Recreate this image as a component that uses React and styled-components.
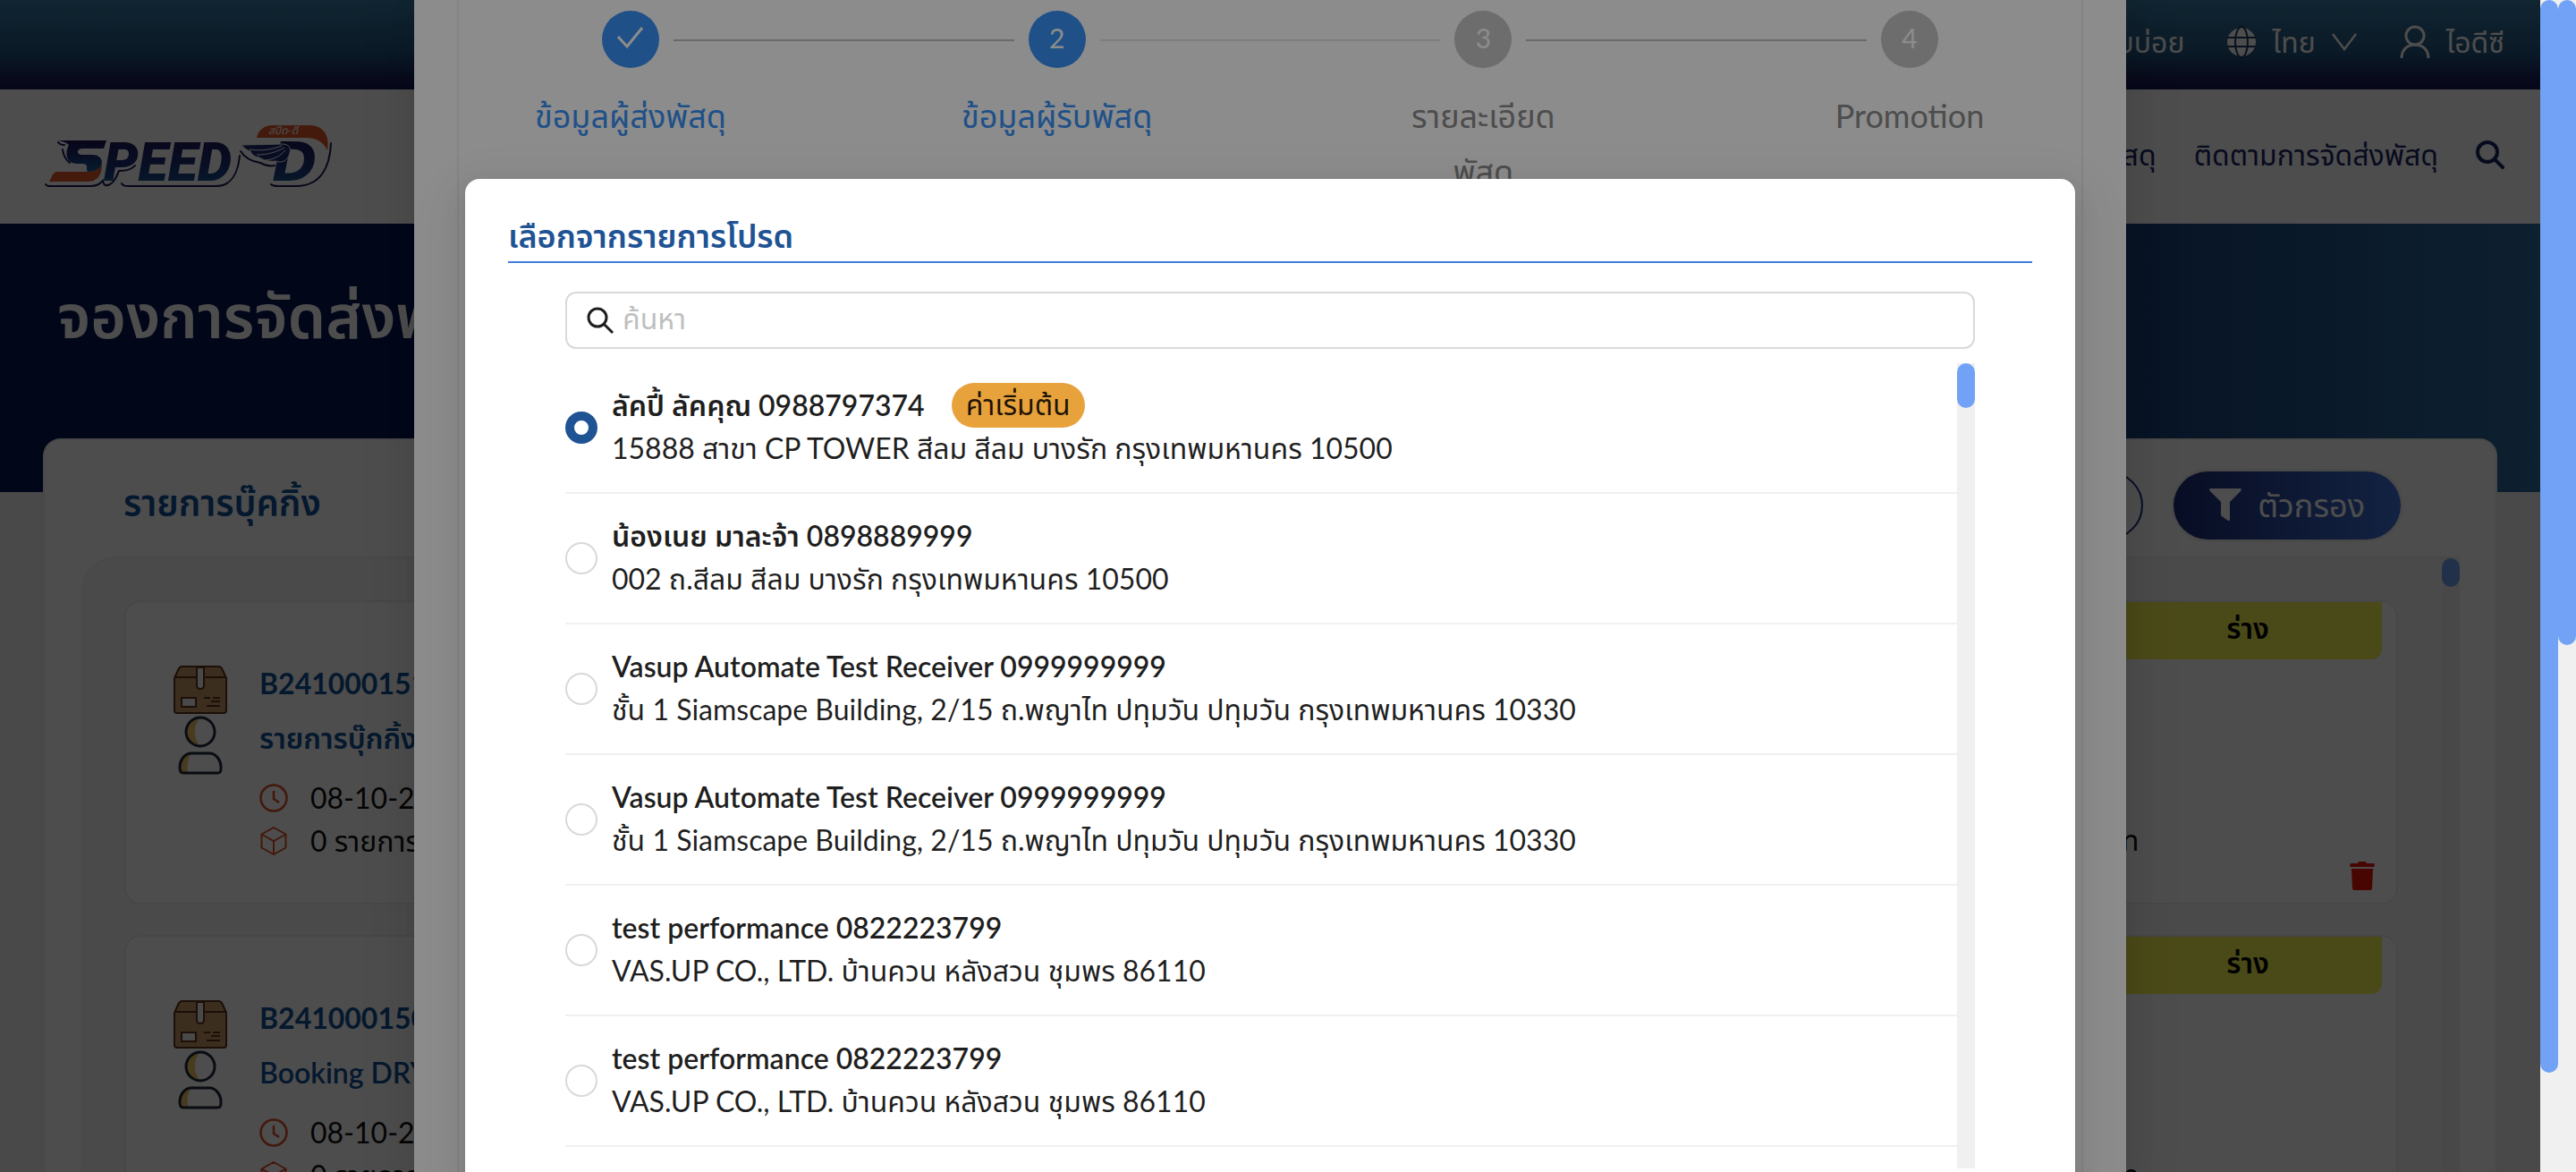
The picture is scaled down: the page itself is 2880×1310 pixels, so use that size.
import React, { useState } from 'react';
import styled, { createGlobalStyle } from 'styled-components';

const GlobalStyle = createGlobalStyle`
  *, *::before, *::after { box-sizing: border-box; }
  body { margin: 0; background: #f0f0f0; }
  body, button, input {
    font-family: Lato, "Noto Sans Thai", "Noto Sans", sans-serif;
    font-size: 32px;
    line-height: 48px;
    color: rgba(0, 0, 0, 0.88);
  }
  h1, h2, p, ul, ol { margin: 0; padding: 0; }
  ul, ol { list-style: none; }
  a { color: inherit; text-decoration: none; }
`;

const Shell = styled.div`
  position: relative;
  height: 100vh;
  overflow: hidden;
  padding-right: 40px;
`;

/* ---------- page behind the dialogs ---------- */

const Page = styled.div`
  background: #f2f2f2;
  min-height: 100%;
`;

const TopBar = styled.nav`
  display: flex;
  align-items: center;
  justify-content: flex-end;
  height: 100px;
  padding: 0 40px 6px;
  gap: 48px;
  color: #fff;
  background: linear-gradient(180deg, #3a7ca6 0%, #23557f 60%, #1c1f58 90%, #131c55 100%);
`;

const TopLink = styled.a`
  display: flex;
  align-items: center;
  gap: 18px;
`;

const LangButton = styled.button`
  display: flex;
  align-items: center;
  gap: 18px;
  padding: 0;
  border: 0;
  background: none;
  color: inherit;
`;

const Header = styled.header`
  display: flex;
  align-items: center;
  justify-content: space-between;
  height: 150px;
  padding: 0 40px 0 48px;
  background: #fff;
`;

const MainNav = styled.nav`
  display: flex;
  align-items: center;
  gap: 42px;
  padding-bottom: 4px;
  color: #1b2566;
`;

const IconButton = styled.button`
  display: flex;
  padding: 0;
  border: 0;
  background: none;
  color: inherit;
`;

const Banner = styled.section`
  height: 300px;
  padding: 62px 64px 0;
  background: linear-gradient(90deg, #071756 68%, #2e6d9f 100%);
`;

const BannerTitle = styled.h1`
  color: #fff;
  font-size: 68px;
  line-height: 80px;
  font-weight: 600;
`;

const Board = styled.main`
  margin: -60px 48px 0;
  padding: 30px 40px 0;
  border: 2px solid #f0f0f0;
  border-radius: 20px;
  background: #fff;
`;

const BoardHead = styled.div`
  display: flex;
  align-items: flex-start;
  justify-content: space-between;
  height: 100px;
  padding: 5px 66px 0 48px;
`;

const BoardTitle = styled.h2`
  color: #12529a;
  font-size: 40px;
  line-height: 70px;
  font-weight: 600;
`;

const Actions = styled.div`
  display: flex;
  gap: 34px;
`;

const PillButton = styled.button`
  display: flex;
  align-items: center;
  gap: 18px;
  height: 76px;
  padding: 0 40px 2px;
  border: ${(p) => (p.$outlined ? '2px solid #1d2f7f' : '0')};
  border-radius: 38px;
  font-size: 36px;
  color: ${(p) => (p.$outlined ? '#1d2f7f' : '#fff')};
  background: ${(p) => (p.$outlined ? '#fff' : 'linear-gradient(90deg, #1c2d78, #3f74dc)')};
  box-shadow: ${(p) => (p.$outlined ? 'none' : '0 0 2px 2px rgba(0, 0, 0, 0.08)')};
`;

const Scroll = styled.div`
  display: flex;
  border-top: 2px solid #f0f0f0;
  border-radius: 40px 0 0 0;
  background: #f7f7f7;
`;

const Cards = styled.ul`
  flex: 1;
  display: flex;
  flex-direction: column;
  gap: 34px;
  padding: 47px 49px 0;
`;

const Card = styled.li`
  display: flex;
  height: 340px;
  border: 2px solid #ececec;
  border-radius: 18px;
  background: #fff;
`;

const Avatar = styled.div`
  display: flex;
  flex-direction: column;
  align-items: center;
  gap: 2px;
  width: 166px;
  padding-top: 71px;
`;

const CardBody = styled.div`
  flex: 1;
  padding-top: 59px;
  margin-left: -17px;
`;

const CardLine = styled.p`
  color: #12529a;
  font-weight: ${(p) => (p.$last ? 600 : 700)};
  line-height: ${(p) => (p.$last ? '62px' : '64px')};
  height: ${(p) => (p.$last ? '74px' : '62px')};
`;

const Meta = styled.p`
  display: flex;
  align-items: center;
  gap: 25px;
  color: #111;
`;

const CardSide = styled.div`
  display: flex;
  flex-direction: column;
  align-items: flex-end;
  width: 500px;
  padding-right: 16px;
`;

const Tag = styled.span`
  width: 300px;
  height: 64px;
  padding-top: 5px;
  border-radius: 0 0 12px 12px;
  background: #f7f550;
  color: #000;
  font-weight: 600;
  text-align: center;
`;

const Price = styled.p`
  width: 100%;
  padding: 178px 0 2px 134px;
  color: #111;
`;

const TrashButton = styled(IconButton)`
  margin: -2px 8px 0 0;
  color: #ee150d;
`;

/* ---------- scroll bars ---------- */

const Track = styled.div`
  flex: none;
  width: 20px;
  background: #f0f0f0;
`;

const Thumb = styled.div`
  height: ${(p) => p.$length};
  border-radius: 10px;
  background: #72a2f6;
`;

const Rails = styled.div`
  position: absolute;
  inset: 0 0 0 auto;
  display: flex;
`;

/* ---------- dialogs ---------- */

const Mask = styled.div`
  position: absolute;
  inset: 0 40px 0 0;
  display: flex;
  justify-content: center;
  align-items: flex-start;
  overflow: hidden;
  background: rgba(0, 0, 0, 0.45);
`;

const Dialog = styled.section`
  max-width: 100%;
  background: #fff;
  box-shadow: 0 12px 32px rgba(0, 0, 0, 0.08), 0 6px 12px -8px rgba(0, 0, 0, 0.12),
    0 18px 56px 16px rgba(0, 0, 0, 0.05);
`;

const WizardDialog = styled(Dialog)`
  width: 1914px;
  height: 100%;
  padding: 0 48px;
`;

const WizardPanel = styled.div`
  height: 100%;
  padding: 12px 160px 0;
  border: solid #f0f0f0;
  border-width: 0 2px;
`;

const Steps = styled.ol`
  display: flex;
  align-items: flex-start;
  justify-content: space-between;
`;

const Step = styled.li`
  display: flex;
  flex-direction: column;
  align-items: center;
  width: 64px;
  color: ${(p) => (p.$active ? '#3993f8' : '#8c8c8c')};
`;

const StepDot = styled.span`
  display: flex;
  align-items: center;
  justify-content: center;
  width: 64px;
  height: 64px;
  padding-bottom: 4px;
  border-radius: 50%;
  font-size: 30px;
  color: #fff;
  background: ${(p) => (p.$active ? '#3993f8' : '#c6c6c6')};
`;

const StepLabel = styled.span`
  width: 240px;
  margin-top: 22px;
  font-size: 36px;
  line-height: 62px;
  text-align: center;
`;

const StepTail = styled.li`
  flex: 1;
  height: 2px;
  margin: 32px 16px 0;
  background: ${(p) => (p.$faint ? '#e6e6e6' : '#bfbfbf')};
`;

const PickerDialog = styled(Dialog)`
  width: 1800px;
  margin-top: 200px;
  padding: 32px 48px 48px;
  border-radius: 16px;
`;

const PickerTitle = styled.h2`
  height: 62px;
  border-bottom: 2px solid #3f7ade;
  color: #205394;
  font-size: 36px;
  line-height: 62px;
  font-weight: 600;
`;

const PickerBody = styled.div`
  padding: 32px 64px 0;
`;

const SearchBox = styled.label`
  display: flex;
  align-items: center;
  gap: 8px;
  height: 64px;
  padding: 0 22px;
  border: 2px solid #d9d9d9;
  border-radius: 12px;
`;

const SearchInput = styled.input`
  flex: 1;
  min-width: 0;
  height: 48px;
  padding: 0 0 4px;
  border: 0;
  outline: 0;
  background: none;
  &::placeholder { color: #bfbfbf; }
`;

const Results = styled.div`
  display: flex;
  height: 900px;
  margin-top: 16px;
  overflow: hidden;
`;

const Contacts = styled.ul`
  flex: 1;
`;

const Contact = styled.li`
  border-bottom: 2px solid #f0f0f0;
`;

const ContactLabel = styled.label`
  display: flex;
  align-items: center;
  gap: 16px;
  height: 144px;
`;

const Radio = styled.input`
  appearance: none;
  flex: none;
  width: 36px;
  height: 36px;
  margin: 0;
  border: 2px solid #d9d9d9;
  border-radius: 50%;
  background: #fff;
  &:checked { border: 10px solid #205394; }
`;

const ContactText = styled.span`
  display: flex;
  flex-direction: column;
  padding-bottom: 2px;
`;

const ContactName = styled.strong`
  display: flex;
  align-items: center;
  gap: 30px;
  height: 48px;
  font-weight: 600;
`;

const Badge = styled.span`
  height: 50px;
  padding: 0 16px;
  border-radius: 25px;
  background: #e8a23c;
  font-weight: 400;
  line-height: 48px;
`;

/* ---------- drawings ---------- */

const LogoDrawing = styled.svg`
  overflow: visible;
`;

const Logo = () => (
  <LogoDrawing width="330" height="80" viewBox="47 136 330 80" role="img" aria-label="SPEED-D">
    <defs>
      <linearGradient id="ink" x1="0" y1="0" x2="0" y2="1">
        <stop offset="0" stopColor="#1d1452" />
        <stop offset="0.5" stopColor="#1c2d74" />
        <stop offset="1" stopColor="#17639c" />
      </linearGradient>
    </defs>
    <g fill="none" stroke="#1a1650" strokeWidth="2" strokeLinecap="round">
      <path d="M50 207c2 3 5 2 8 2h42c7 0 10-2 14-6 1 6 4 6 8 4 5-3 7-8 10-15 8 0 14-1 18-6M135 206c1 3 4 3 8 3h98c16 0 24-14 26-34M302 207c2 2 4 2 8 2h20c28 0 38-22 39-48M64 160c2 3 4 3 7 3M69 168c1 8 4 12 8 15" />
      <path d="M268 170c6 10 16 12 22 13 6 3 12 4 16 3" />
    </g>
    <path d="M54 204l4-8c1-2 3-3 6-3h34c10 0 14-5 14-12 3 12-3 23-14 23z" fill="#e45a2b" />
    <path d="M64 158h54l-3 9H92c-8 0-8 7-1 7h11c16 0 14 19-4 19-2 0-2-2-2-6 0-2-2-3-5-3h-6c-12 0-14-12-9-21-3-3-8-4-12-5z" fill="url(#ink)" />
    <text x="115" y="203" fontFamily="Roboto, sans-serif" fontSize="61" fontWeight="900" fontStyle="italic" fill="url(#ink)">PEED</text>
    <text x="303" y="203" fontFamily="'DejaVu Sans', sans-serif" fontSize="61" fontWeight="700" fontStyle="italic" fill="url(#ink)">D</text>
    <path d="M286 155c2-9 9-14 17-14h42c16 0 23 12 20 28-5-10-13-14-24-14z" fill="#e45a2b" />
    <path d="M269 163l46-1c6 0 10 4 8 10-2 8-8 12-16 9-6 1-14-1-18-4-5 0-9-4-10-7-4-1-8-4-10-7z" fill="#1f2f74" stroke="#fff" strokeWidth="1" />
    <path d="M278 168c14 2 26 0 36-4M286 174c12 0 22-3 31-8M296 180c10-1 17-5 22-11" fill="none" stroke="#fff" strokeWidth="1" />
    <text x="299" y="151" fontFamily="Lato, 'Noto Sans Thai', sans-serif" fontSize="12" fontStyle="italic" fill="#fff">สปีด-ดี</text>
  </LogoDrawing>
);

const Globe = () => (
  <svg width="32" height="38" viewBox="0 -3 32 38" aria-hidden="true">
    <circle cx="16" cy="16" r="16" fill="#fff" />
    <g fill="none" stroke="#1d3a62" strokeWidth="2">
      <ellipse cx="16" cy="16" rx="7" ry="17" />
      <path d="M0 11h32M0 21h32" />
    </g>
  </svg>
);

const Chevron = () => (
  <svg width="28" height="20" viewBox="0 0 28 20" fill="none" stroke="#fff" strokeWidth="2.500" aria-hidden="true">
    <path d="M1 1l13 17L27 1" />
  </svg>
);

const Person = () => (
  <svg width="34" height="38" viewBox="0 0 34 38" fill="none" stroke="#fff" strokeWidth="3" aria-hidden="true">
    <circle cx="17" cy="12" r="10" />
    <path d="M2 37c0-9 6-15 15-15s15 6 15 15" />
  </svg>
);

const BoldSearch = () => (
  <svg width="32" height="32" viewBox="0 0 32 32" fill="none" stroke="currentColor" strokeWidth="4" strokeLinecap="round" aria-hidden="true">
    <circle cx="13" cy="13" r="11" />
    <path d="M21 21l9 9" />
  </svg>
);

const ThinSearch = () => (
  <svg width="32" height="32" viewBox="0 0 32 32" fill="none" stroke="#1f1f1f" strokeWidth="3" aria-hidden="true">
    <circle cx="12" cy="13" r="10" />
    <path d="M19 20l10 10" />
  </svg>
);

const Funnel = () => (
  <svg width="36" height="36" viewBox="0 0 36 36" fill="currentColor" aria-hidden="true">
    <path d="M1 0h34c1 0 1 2 0 3L23 15v20c0 1-1 1-2 1l-7-5c-1-1-1-1-1-2V15L1 3C0 2 0 0 1 0z" />
  </svg>
);

const Check = () => (
  <svg width="32" height="26" viewBox="0 0 32 26" fill="none" stroke="currentColor" strokeWidth="3" aria-hidden="true">
    <path d="M2 12l10 11L29 2" />
  </svg>
);

const Parcel = () => (
  <svg width="60" height="54" viewBox="0 0 60 54" aria-hidden="true">
    <path d="M1 14L6 3c1-1 2-2 3-2h42c1 0 2 1 3 2l5 11v36c0 2-1 3-3 3H4c-2 0-3-1-3-3z" fill="#c99a6b" stroke="#5b341b" strokeWidth="2" strokeLinejoin="round" />
    <path d="M2 13h56" stroke="#5b341b" strokeWidth="2" />
    <path d="M26 2h8v20c0 2-1 4-4 4s-4-2-4-4z" fill="#f4f4f4" stroke="#5b341b" strokeWidth="2" />
    <path d="M9 36h16v10H9z" fill="#f4f4f4" stroke="#5b341b" strokeWidth="2" />
    <path d="M34 36h7M44 36h8M42 40h10M37 45h15" stroke="#5b341b" strokeWidth="2" />
  </svg>
);

const Customer = () => (
  <svg width="50" height="68" viewBox="0 0 50 68" aria-hidden="true">
    <path d="M24 3a15 15 0 0 0 0 30c-7-8-7-22 0-30z" fill="#eec565" />
    <circle cx="25" cy="18" r="16" fill="none" stroke="#222a3d" strokeWidth="3" />
    <path d="M4 63c-2-13 3-20 11-21-4 5-5 12-4 21z" fill="#eec565" />
    <path d="M15 42h20c8 0 13 8 13 16 0 5-1 6-4 6H6c-3 0-4-2-4-6 0-8 5-16 13-16z" fill="none" stroke="#222a3d" strokeWidth="3" />
  </svg>
);

const Clock = () => (
  <svg width="32" height="32" viewBox="0 0 32 32" fill="none" stroke="#e0522a" strokeWidth="2.500" aria-hidden="true">
    <circle cx="16" cy="16" r="14.500" />
    <path d="M16 8v9l6 4" />
  </svg>
);

const Cube = () => (
  <svg width="32" height="32" viewBox="0 0 32 32" fill="none" stroke="#e0522a" strokeWidth="2" aria-hidden="true">
    <path d="M16 1l13.500 7.500v15L16 31 2.500 23.500v-15zM2.500 8.500L16 16l13.500-7.500M16 16v15" />
  </svg>
);

const Trash = () => (
  <svg width="28" height="32" viewBox="0 0 28 32" fill="currentColor" aria-hidden="true">
    <path d="M1 2h8l1-2h8l1 2h8c1 0 1 4 0 4H1C0 6 0 2 1 2zM2 8h24l-1 22c0 1-1 2-2 2H5c-1 0-2-1-2-2z" />
  </svg>
);

/* ---------- content ---------- */

const steps = [
  { label: 'ข้อมูลผู้ส่งพัสดุ', mark: <Check />, active: true },
  { label: 'ข้อมูลผู้รับพัสดุ', mark: '2', active: true, faint: true },
  { label: <>รายละเอียด<br />พัสดุ</>, mark: '3' },
  { label: 'Promotion', mark: '4' },
];

const bookings = [
  { code: 'B24100015123', name: 'รายการบุ๊กกิ้ง' },
  { code: 'B24100015098', name: 'Booking DRY' },
];

const siam = 'ชั้น 1 Siamscape Building, 2/15 ถ.พญาไท ปทุมวัน ปทุมวัน กรุงเทพมหานคร 10330';
const vasup = 'VAS.UP CO., LTD. บ้านควน หลังสวน ชุมพร 86110';

const contacts = [
  { name: 'ลัคปี้ ลัคคุณ 0988797374', address: '15888 สาขา CP TOWER สีลม สีลม บางรัก กรุงเทพมหานคร 10500', main: true },
  { name: 'น้องเนย มาละจ้า 0898889999', address: '002 ถ.สีลม สีลม บางรัก กรุงเทพมหานคร 10500' },
  { name: 'Vasup Automate Test Receiver 0999999999', address: siam },
  { name: 'Vasup Automate Test Receiver 0999999999', address: siam },
  { name: 'test performance 0822223799', address: vasup },
  { name: 'test performance 0822223799', address: vasup },
];

function BookingPage() {
  return (
    <Page>
      <TopBar>
        <TopLink href="#faq">คำถามที่พบบ่อย</TopLink>
        <LangButton type="button"><Globe />ไทย<Chevron /></LangButton>
        <TopLink href="#account"><Person />ไอดีซี</TopLink>
      </TopBar>
      <Header>
        <Logo />
        <MainNav>
          <a href="#booking">จองการจัดส่งพัสดุ</a>
          <a href="#tracking">ติดตามการจัดส่งพัสดุ</a>
          <IconButton type="button" aria-label="ค้นหา"><BoldSearch /></IconButton>
        </MainNav>
      </Header>
      <Banner><BannerTitle>จองการจัดส่งพัสดุ</BannerTitle></Banner>
      <Board>
        <BoardHead>
          <BoardTitle>รายการบุ๊คกิ้ง</BoardTitle>
          <Actions>
            <PillButton type="button" $outlined>สร้างรายการ</PillButton>
            <PillButton type="button"><Funnel />ตัวกรอง</PillButton>
          </Actions>
        </BoardHead>
        <Scroll>
          <Cards>
            {bookings.map((b) => (
              <Card key={b.code}>
                <Avatar><Parcel /><Customer /></Avatar>
                <CardBody>
                  <CardLine>{b.code}</CardLine>
                  <CardLine $last>{b.name}</CardLine>
                  <Meta><Clock />08-10-2567</Meta>
                  <Meta><Cube />0 รายการ</Meta>
                </CardBody>
                <CardSide>
                  <Tag>ร่าง</Tag>
                  <Price>0 บาท</Price>
                  <TrashButton type="button" aria-label="ลบ"><Trash /></TrashButton>
                </CardSide>
              </Card>
            ))}
          </Cards>
          <Track><Thumb $length="32px" /></Track>
        </Scroll>
      </Board>
    </Page>
  );
}

function Wizard() {
  return (
    <WizardDialog role="dialog" aria-label="จองการจัดส่งพัสดุ">
      <WizardPanel>
        <Steps>
          {steps.map((s, i) => (
            <React.Fragment key={i}>
              <Step $active={s.active}>
                <StepDot $active={s.active}>{s.mark}</StepDot>
                <StepLabel>{s.label}</StepLabel>
              </Step>
              {i < steps.length - 1 && <StepTail $faint={s.faint} aria-hidden="true" />}
            </React.Fragment>
          ))}
        </Steps>
      </WizardPanel>
    </WizardDialog>
  );
}

function FavouritePicker() {
  const [picked, setPicked] = useState(0);
  return (
    <PickerDialog role="dialog" aria-labelledby="picker-title">
      <PickerTitle id="picker-title">เลือกจากรายการโปรด</PickerTitle>
      <PickerBody>
        <SearchBox>
          <ThinSearch />
          <SearchInput type="text" placeholder="ค้นหา" aria-label="ค้นหา" />
        </SearchBox>
        <Results>
          <Contacts>
            {contacts.map((c, i) => (
              <Contact key={i}>
                <ContactLabel>
                  <Radio type="radio" name="contact" checked={picked === i} onChange={() => setPicked(i)} />
                  <ContactText>
                    <ContactName>{c.name}{c.main && <Badge>ค่าเริ่มต้น</Badge>}</ContactName>
                    <span>{c.address}</span>
                  </ContactText>
                </ContactLabel>
              </Contact>
            ))}
          </Contacts>
          <Track><Thumb $length="50px" /></Track>
        </Results>
      </PickerBody>
    </PickerDialog>
  );
}

export default function App() {
  return (
    <Shell>
      <GlobalStyle />
      <BookingPage />
      <Mask><Wizard /></Mask>
      <Mask><FavouritePicker /></Mask>
      <Rails aria-hidden="true">
        <Track><Thumb $length="91.5%" /></Track>
        <Track><Thumb $length="55%" /></Track>
      </Rails>
    </Shell>
  );
}
